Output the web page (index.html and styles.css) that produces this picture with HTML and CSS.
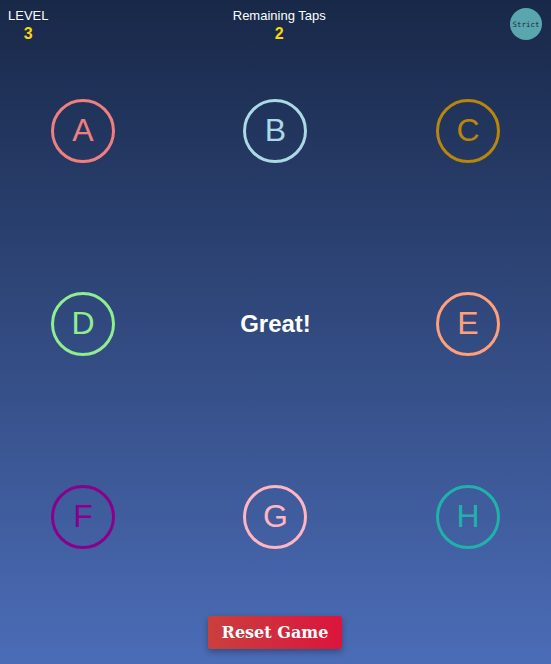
FILE: index.html
```html
<!DOCTYPE html>
<html>
<head>
<meta charset="utf-8">
<link rel="stylesheet" href="styles.css">
</head>
<body>
<div class="app">
  <header class="top">
    <div class="stat level">
      <div class="label">LEVEL</div>
      <div class="value">3</div>
    </div>
    <div class="stat taps">
      <div class="label">Remaining Taps</div>
      <div class="value">2</div>
    </div>
    <button class="strict">Strict</button>
  </header>
  <main class="board">
    <div class="cell"><div class="pad c-a">A</div></div>
    <div class="cell"><div class="pad c-b">B</div></div>
    <div class="cell"><div class="pad c-c">C</div></div>
    <div class="cell"><div class="pad c-d">D</div></div>
    <div class="cell"><div class="message">Great!</div></div>
    <div class="cell"><div class="pad c-e">E</div></div>
    <div class="cell"><div class="pad c-f">F</div></div>
    <div class="cell"><div class="pad c-g">G</div></div>
    <div class="cell"><div class="pad c-h">H</div></div>
  </main>
  <footer class="foot">
    <button class="reset">Reset Game</button>
  </footer>
</div>
</body>
</html>
```
FILE: styles.css
```css
html, body {
  margin: 0;
  padding: 0;
  height: 100%;
}
body {
  background: linear-gradient(to bottom, #182848, #4b6cb7);
  font-family: "Liberation Sans", Arial, sans-serif;
  color: #fff;
  overflow: hidden;
}
.app {
  height: 664px;
  display: flex;
  flex-direction: column;
}
.app > * {
  flex-shrink: 0;
}
.top {
  display: flex;
  justify-content: space-between;
  align-items: flex-start;
  padding: 8px 9px 0 8px;
  height: 40px;
}
.stat {
  display: flex;
  flex-direction: column;
  align-items: center;
}
.label {
  font-size: 13px;
  line-height: 16px;
}
.value {
  color: #ffd700;
  font-weight: bold;
  font-size: 16px;
  line-height: 20px;
}
.strict {
  width: 32px;
  height: 32px;
  border-radius: 50%;
  border: none;
  background: #5aa6ae;
  color: #1c2b33;
  font-family: "DejaVu Sans Mono", monospace;
  font-size: 7.5px;
  padding: 0;
  margin-top: 0;
}
.board {
  display: grid;
  grid-template-columns: repeat(3, 1fr);
  grid-template-rows: repeat(3, 193px);
  padding: 0 51px;
  margin-top: -14px;
}
.cell {
  display: flex;
  align-items: center;
  justify-content: center;
}
.cell:nth-child(3n+1) { justify-content: flex-start; }
.cell:nth-child(3n) { justify-content: flex-end; }
.pad {
  width: 58px;
  height: 58px;
  border: 3px solid;
  border-radius: 50%;
  display: flex;
  align-items: center;
  justify-content: center;
  font-size: 32px;
}
.message {
  font-size: 24px;
  font-weight: bold;
}
.c-a { color: #f08080; }
.c-b { color: #add8e6; }
.c-c { color: #b8860b; }
.c-d { color: #90ee90; }
.c-e { color: #ffa07a; }
.c-f { color: #8b008b; }
.c-g { color: #ffb6c1; }
.c-h { color: #20b2aa; }
.foot {
  display: flex;
  justify-content: center;
  margin-top: auto;
  padding-bottom: 15px;
}
.reset {
  background: linear-gradient(to right, #c9403e, #dc143c);
  color: #fff;
  border: none;
  border-radius: 3px;
  font-family: "DejaVu Serif", serif;
  font-weight: bold;
  font-size: 16px;
  width: 134px;
  height: 33px;
  padding: 0;
  margin-left: -1px;
  margin-bottom: 0;
  box-shadow: 0 3px 6px rgba(0,0,0,0.3);
}
```
